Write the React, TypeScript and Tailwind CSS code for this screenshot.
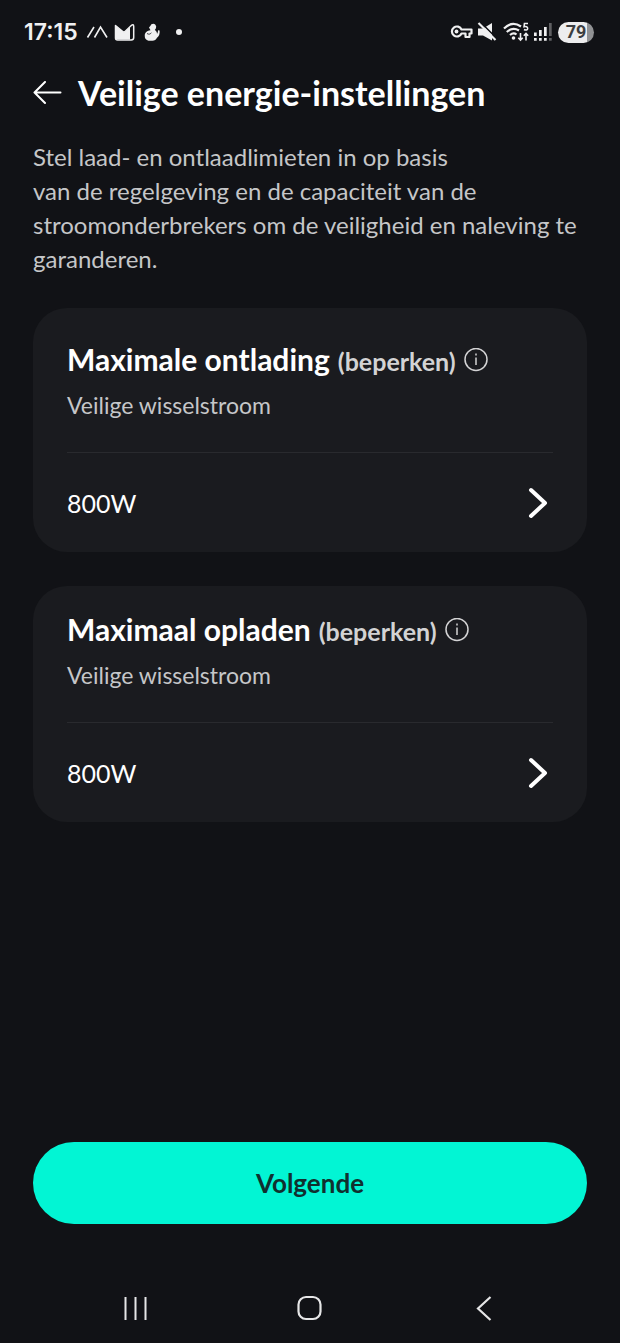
import React from 'react';

interface LimitCardProps {
    title: string;
    value: string;
    roomy?: boolean;
}

const StatusBar: React.FC = () => (
    <div className="flex h-16 items-center justify-between pl-6 pr-[26px] text-[#f0f0f1]">
        <div className="flex items-center">
            <span className="w-[62px] font-[Inter,sans-serif] text-[23px] font-semibold leading-7">17:15</span>
            <svg className="h-4 w-[22px]" viewBox="0 0 22 16" fill="none" stroke="currentColor" strokeWidth="1.6">
                <path d="M1.500 13.500 8 3M8.500 13.500 14.500 3l6.500 10.500" />
            </svg>
            <svg className="ml-1.5 h-5 w-[22px]" viewBox="0 0 22 20" fill="none">
                <path d="M1.500 3.500 10 10.500l6-5.500v12.500H3.500q-2 0-2-2Z" fill="currentColor" />
                <path d="M1.500 3.500 10 10.500l7-6.700q2.700-2.300 2.700.7v11q0 2.500-2.500 2.500H3.500q-2 0-2-2Z" stroke="currentColor" strokeWidth="1.500" strokeLinejoin="round" />
            </svg>
            <svg className="ml-2 h-[18px] w-4" viewBox="0 0 16 18">
                <path d="M5 4.500 6.300 3Q7 .7 9.300.7T12.200 3.600q0 2-1.400 3.500c1.500 1 2.300 2.300 2.200 4q1.200-1.500 1-3.800l1.600.2c.4 3.300-.6 6-2.600 7.200-1 2-2.500 3-4.500 3H4.500C2 17 .8 15.500.8 13.500c-.2-1.800.2-3.200 1-4C2.500 8.200 4.500 7.800 6.500 7.300Z" fill="currentColor" />
                <path d="M3 10.500c1.800 1.200 3.500.7 4.300-.8" fill="none" stroke="#111216" strokeWidth=".8" />
            </svg>
            <span className="ml-4 size-[6px] rounded-full bg-[#f0f0f1]" />
        </div>

        <div className="flex items-center">
            <svg className="h-4 w-[23px]" viewBox="0 0 23 16" fill="none" stroke="currentColor" strokeWidth="2.200">
                <path d="M11.500 5.500H21.500v4h-2V13h-4V9.500h-4A5 5 0 1 1 11.500 5.500Z" strokeLinejoin="round" />
                <circle cx="6.500" cy="7.500" r="1.900" fill="currentColor" stroke="none" />
            </svg>
            <svg className="ml-1 h-5 w-5" viewBox="0 0 20 20">
                <path d="M1 6.500h5L15 1v17.500L6 13.500H1Z" fill="currentColor" />
                <path d="m3.300 0 17 17" stroke="#111216" strokeWidth="1.600" />
                <path d="m1.500 1 17 17" stroke="currentColor" strokeWidth="2.200" />
            </svg>
            <svg className="ml-1.5 h-5 w-[27px]" viewBox="0 0 27 20" fill="none" stroke="currentColor" strokeWidth="2.200">
                <path d="M1 6.500Q9-1.500 18 4.500M3.800 10Q9.500 4.500 16 8.500M7 13q3.500-3 6.500-.5" />
                <circle cx="10.500" cy="16" r="1.800" fill="currentColor" stroke="none" />
                <path d="M25 1.500h-3.600L21 4.800c2-.6 3.700 0 3.700 1.700 0 1.500-2 2-3.700 1" strokeWidth="1.500" />
                <path d="M17.500 11v7M15.300 15.800l2.200 2.200 2.200-2.200M23 18.500v-7M20.800 13.700l2.200-2.200 2.200 2.200" strokeWidth="1.600" />
            </svg>
            <svg className="ml-1 h-[18px] w-[18px]" viewBox="0 0 18 18" fill="currentColor">
                <path d="M0 9.500h2.700V13H0zM5 7h2.700v6H5zM10 4h2.700v9H10zM0 15h2.700v2.700H0zM5 15h2.700v2.700H5zM10 15h2.700v2.700H10z" />
                <path d="M15 0h2.700v13H15zM15 15h2.700v2.700H15z" opacity=".35" />
            </svg>
            <span className="ml-1.5 flex h-[21px] w-9 items-center justify-center rounded-full bg-linear-to-r from-[#ededee] from-80% to-[#909193] to-80% font-[Roboto,sans-serif] text-lg font-bold leading-5 text-[#3c3d40]">
                79
            </span>
        </div>
    </div>
);

const LimitCard: React.FC<LimitCardProps> = ({ title, value, roomy }) => (
    <section className={`rounded-[34px] bg-[#1a1b1f] px-[34px] ${roomy ? 'pt-8' : 'pt-6'}`}>
        <div className="flex h-10 items-center">
            <h2 className="flex items-baseline gap-2 text-[30px] font-bold leading-10 text-white">
                {title}
                <span className="text-[25px] font-bold leading-10 text-[#d3d3d4]">(beperken)</span>
            </h2>
            <button aria-label="Info" className="ml-2 text-[#d3d3d4]">
                <svg className="size-6" viewBox="0 0 24 24" fill="none" stroke="currentColor" strokeWidth="1.500">
                    <circle cx="12" cy="11.500" r="11" />
                    <path d="M12 9.500V17M12 5.500v2" />
                </svg>
            </button>
        </div>
        <p className="mt-2 text-[23px] leading-[34px] text-[#c5c6c8]">Veilige wisselstroom</p>
        <button className="mt-[30px] flex h-[100px] w-full items-center justify-between border-t border-[#292a2e] pr-0.5 text-left text-[25px] leading-8 text-white">
            {value}
            <svg className="h-8 w-6" viewBox="0 0 24 32" fill="none" stroke="currentColor" strokeWidth="4" strokeLinecap="round" strokeLinejoin="round">
                <path d="m4 3 14 13L4 29" />
            </svg>
        </button>
    </section>
);

const App: React.FC = () => {
    return (
        <div className="flex min-h-screen flex-col bg-[#111216] font-[Lato,sans-serif]">
            <StatusBar />

            <header className="flex h-[58px] items-center gap-4 px-[33px]">
                <button aria-label="Terug" className="text-white">
                    <svg className="h-6 w-[29px]" viewBox="0 0 29 24" fill="none" stroke="currentColor" strokeWidth="2" strokeLinecap="round" strokeLinejoin="round">
                        <path d="M27.500 11.500H1.500M12 1 1.500 11.500 12 22" />
                    </svg>
                </button>
                <h1 className="text-[34px] font-bold leading-10 text-white">Veilige energie-instellingen</h1>
            </header>

            <main className="flex flex-col px-[33px]">
                <p className="mt-[18px] text-2xl leading-[34px] text-[#c5c6c8]">
                    Stel laad- en ontlaadlimieten in op basis
                    <br />
                    van de regelgeving en de capaciteit van de stroomonderbrekers om de veiligheid en naleving te garanderen.
                </p>
                <div className="mt-8 flex flex-col gap-[34px]">
                    <LimitCard title="Maximale ontlading" value="800W" roomy />
                    <LimitCard title="Maximaal opladen" value="800W" />
                </div>
            </main>

            <footer className="mt-auto">
                <div className="px-[33px]">
                    <button className="h-[82px] w-full rounded-full bg-[#02f5d4] text-[26px] font-bold leading-8 text-[#10302f]">
                        Volgende
                    </button>
                </div>
                <nav className="mt-[49px] grid h-[70px] grid-cols-3 items-center justify-items-center px-12 text-[#e6e6e7]">
                    <button aria-label="Recente apps">
                        <svg className="h-7 w-7" viewBox="0 0 28 28" stroke="currentColor" strokeWidth="2">
                            <path d="M4.500 3v23M14.500 3v23M24.500 3v23" />
                        </svg>
                    </button>
                    <button aria-label="Startscherm">
                        <svg className="h-7 w-7" viewBox="0 0 28 28" fill="none" stroke="currentColor" strokeWidth="2.200">
                            <rect x="2.500" y="3" width="22" height="22" rx="7.500" />
                        </svg>
                    </button>
                    <button aria-label="Vorige">
                        <svg className="h-7 w-7" viewBox="0 0 28 28" fill="none" stroke="currentColor" strokeWidth="2.200">
                            <path d="M19.500 3 7 14.500 19.500 26" />
                        </svg>
                    </button>
                </nav>
            </footer>
        </div>
    );
};

export default App;
